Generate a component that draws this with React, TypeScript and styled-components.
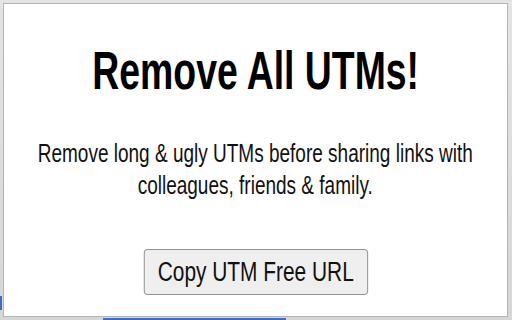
import React from "react";
import styled, { createGlobalStyle } from "styled-components";

const GlobalStyle = createGlobalStyle`
  html, body {
    margin: 0;
    padding: 0;
    width: 512px;
    height: 320px;
    overflow: hidden;
    background: #dcdcdc;
  }
`;

const Frame = styled.div`
  position: relative;
  width: 512px;
  height: 320px;
  box-sizing: border-box;
  padding: 3px 4px 3px 3px;
  background: linear-gradient(#e4e4e4, #d6d6d6);
`;

// bits of the window underneath that peek out round the popup
const Peek = styled.div<{ $x: number; $y: number; $w: number; $h: number }>`
  position: absolute;
  left: ${(p) => p.$x}px;
  top: ${(p) => p.$y}px;
  width: ${(p) => p.$w}px;
  height: ${(p) => p.$h}px;
  background: #3d6cc0;
`;

const Card = styled.div`
  position: relative;
  z-index: 1;
  height: 100%;
  box-sizing: border-box;
  border: 1px solid #b4b4b4;
  background: #fff;
  overflow: hidden;
  display: flex;
  flex-direction: column;
  align-items: center;
  padding-top: 40px;
  font-family: "Liberation Sans", Arial, Helvetica, sans-serif;
`;

const Title = styled.h1`
  margin: 0;
  flex: none;
  font-size: 53px;
  line-height: 53px;
  font-weight: 700;
  color: #000;
  white-space: nowrap;
  transform: scaleX(0.705);
`;

const Blurb = styled.p`
  margin: 40px 0 0;
  flex: none;
  font-size: 25px;
  line-height: 32px;
  color: #111;
  text-align: center;
  white-space: nowrap;
  transform: scaleX(0.76);
`;

const CopyButton = styled.button`
  margin-top: 48px;
  flex: none;
  box-sizing: border-box;
  height: 46px;
  padding: 0 17px;
  font-family: inherit;
  font-size: 27px;
  line-height: 31px;
  color: #111;
  background: #efefef;
  border: 1.3px solid #858585;
  border-radius: 4px;
  white-space: nowrap;
  transform: scaleX(0.773);
`;

export default function App() {
  return (
    <>
      <GlobalStyle />
      <Frame>
        <Peek $x={103} $y={318} $w={183} $h={2} />
        <Peek $x={0} $y={296} $w={2} $h={14} />
        <Card>
          <Title>Remove All UTMs!</Title>
          <Blurb>
            Remove long &amp; ugly UTMs before sharing links with
            <br />
            colleagues, friends &amp; family.
          </Blurb>
          <CopyButton>Copy UTM Free URL</CopyButton>
        </Card>
      </Frame>
    </>
  );
}
